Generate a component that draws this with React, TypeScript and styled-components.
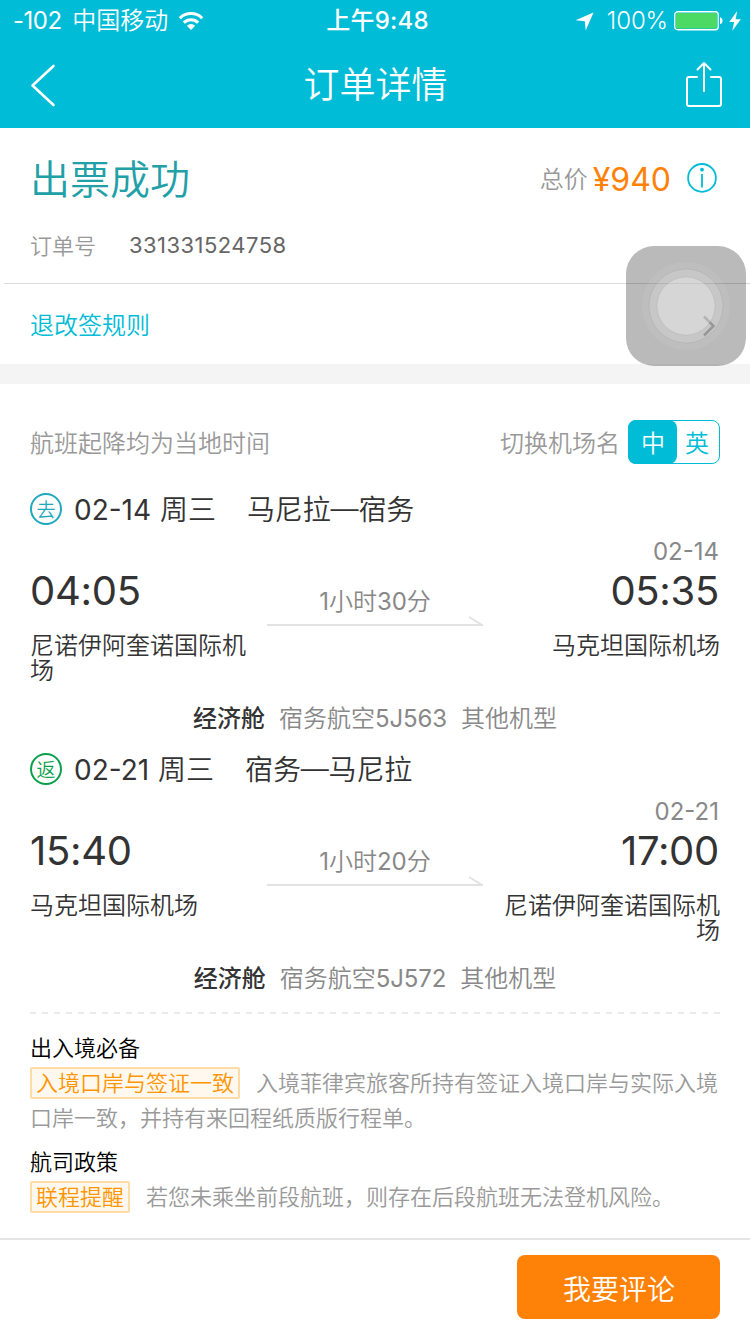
import React from "react";
import styled, { createGlobalStyle } from "styled-components";

const CYAN = "#00bcd7";
const ORANGE = "#ff8208";

const GlobalStyle = createGlobalStyle`
  *, *::before, *::after { box-sizing: border-box; }
  body {
    margin: 0;
    background: #fff;
    font-family: Inter, "Noto Sans CJK SC", sans-serif;
    font-weight: 350;
    -webkit-font-smoothing: antialiased;
  }
`;

const Screen = styled.div`
  position: relative;
  width: 750px;
  height: 1334px;
  display: flex;
  flex-direction: column;
  background: #fff;
  overflow: hidden;
  white-space: nowrap;
`;

const Digits = styled.span<{ $tracking?: number }>`
  font-weight: 400;
  letter-spacing: ${(p) => p.$tracking ?? 0}px;
`;

const Header = styled.header`
  height: 128px;
  flex: none;
  background: ${CYAN};
  color: #fff;
`;

const StatusBar = styled.div`
  height: 40px;
  padding: 1px 9px 0 13px;
  display: grid;
  grid-template-columns: 1fr auto 1fr;
  align-items: center;
  font-size: 24px;
  line-height: 40px;
`;

const StatusGroup = styled.div<{ $end?: boolean }>`
  display: flex;
  align-items: center;
  justify-content: ${(p) => (p.$end ? "flex-end" : "flex-start")};
  svg { flex: none; }
`;

const Carrier = styled.span`
  width: 165px;
  word-spacing: 4px;
`;

const Clock = styled.span`
  padding-left: 1px;
  font-weight: 500;
  letter-spacing: 0.2px;
`;

const Percent = styled.span`
  margin: 0 6px 0 13px;
  letter-spacing: -0.1px;
`;

const NavBar = styled.div`
  height: 88px;
  padding: 0 28px 0 30px;
  display: flex;
  align-items: center;
  justify-content: space-between;
`;

const Title = styled.h1`
  margin: 2px 0 0 9px;
  font-size: 36px;
  font-weight: 350;
  line-height: 50px;
`;

const Summary = styled.section`
  height: 155px;
  flex: none;
  padding: 20px 33px 0 30px;
`;

const SummaryRow = styled.div`
  height: 60px;
  display: flex;
  align-items: center;
  justify-content: space-between;
`;

const Status = styled.div`
  padding-top: 4px;
  font-size: 40px;
  line-height: 60px;
  color: #21a0a8;
`;

const Price = styled.div`
  display: flex;
  align-items: center;
  svg { margin-left: 16px; }
`;

const PriceLabel = styled.span`
  padding-bottom: 1px;
  font-size: 24px;
  color: #999;
`;

const Amount = styled.span`
  margin-left: 5px;
  padding-top: 3px;
  font-size: 32px;
  font-weight: 400;
  line-height: 40px;
  color: ${ORANGE};
`;

const OrderRow = styled.div`
  margin-top: 16px;
  height: 40px;
  display: flex;
  align-items: center;
  font-size: 22px;
  color: #999;
`;

const OrderNumber = styled.span`
  margin-left: 33px;
  padding-top: 1px;
  font-weight: 400;
  letter-spacing: 0.45px;
  color: #666;
`;

const RulesRow = styled.div`
  height: 81px;
  flex: none;
  margin-left: 4px;
  padding: 0 34px 2px 26px;
  display: flex;
  align-items: center;
  justify-content: space-between;
  border-top: 1px solid #dcdcdc;
  font-size: 24px;
  color: ${CYAN};
  svg { margin-top: 5px; }
`;

const Divider = styled.div`
  height: 20px;
  flex: none;
  background: #f4f4f4;
`;

const Flights = styled.section`
  padding: 36px 30px 0;
`;

const SwitchRow = styled.div`
  height: 44px;
  margin-bottom: 16px;
  display: flex;
  align-items: center;
  font-size: 24px;
  line-height: 42px;
  color: #999;
`;

const SwitchNotice = styled.span`
  padding-top: 3px;
`;

const SwitchLabel = styled.span`
  margin: 0 8px 0 auto;
  padding-top: 3px;
`;

const Toggle = styled.div`
  width: 92px;
  height: 44px;
  display: flex;
  border: 1px solid ${CYAN};
  border-radius: 8px;
`;

const ToggleOption = styled.div<{ $active?: boolean }>`
  width: ${(p) => (p.$active ? 49 : 43)}px;
  height: 44px;
  margin: -1px ${(p) => (p.$active ? 0 : -1)}px 0 ${(p) => (p.$active ? -1 : 0)}px;
  padding: 3px ${(p) => (p.$active ? 0 : 3)}px 0 ${(p) => (p.$active ? 1 : 0)}px;
  display: flex;
  align-items: center;
  justify-content: center;
  border-radius: 8px;
  background: ${(p) => (p.$active ? CYAN : "transparent")};
  color: ${(p) => (p.$active ? "#fff" : CYAN)};
`;

const LegBlock = styled.article`
  height: 260px;
  color: #333;
`;

const LegTitle = styled.div`
  height: 58px;
  display: flex;
  align-items: center;
  font-size: 28px;
  line-height: 56px;
`;

const DirectionBadge = styled.span<{ $color: string }>`
  width: 32px;
  height: 32px;
  margin-right: 12px;
  padding-top: 4px;
  display: flex;
  align-items: center;
  justify-content: center;
  border: 2px solid ${(p) => p.$color};
  border-radius: 50%;
  font-size: 19px;
  line-height: 28px;
  color: ${(p) => p.$color};
`;

const LegDate = styled.span`
  padding-top: 2px;
  word-spacing: 1px;
`;

const Route = styled.span`
  margin-left: 31px;
  padding-top: 2px;
  letter-spacing: -0.15px;
`;

const RouteDash = styled.span`
  font-family: "Liberation Sans", sans-serif;
  line-height: 1;
  vertical-align: 3px;
`;

const LegBody = styled.div`
  height: 164px;
  display: grid;
  grid-template-columns: 237px 216px 1fr;
`;

const Stop = styled.div<{ $end?: boolean }>`
  display: flex;
  flex-direction: column;
  text-align: ${(p) => (p.$end ? "right" : "left")};
  align-items: ${(p) => (p.$end ? "flex-end" : "flex-start")};
`;

const StopDate = styled.div`
  height: 28px;
  padding-right: 1px;
  line-height: 27px;
  font-size: 24px;
  font-weight: 400;
  color: #888;
`;

const StopTime = styled.div`
  height: 50px;
  padding-right: 1px;
  line-height: 50px;
  font-size: 40px;
  font-weight: 400;
  letter-spacing: -0.3px;
`;

const Airport = styled.div`
  width: 218px;
  margin-top: 17px;
  font-size: 24px;
  line-height: 25px;
  white-space: normal;
`;

const Duration = styled.div`
  padding-top: 50px;
  display: flex;
  flex-direction: column;
  align-items: center;
  font-size: 24px;
  line-height: 28px;
  color: #888;
  svg {
    flex: none;
    margin-top: -1px;
  }
`;

const Cabin = styled.div`
  height: 30px;
  margin-top: -1px;
  display: flex;
  align-items: center;
  justify-content: center;
  gap: 14px;
  font-size: 24px;
  color: #888;
`;

const CabinClass = styled.strong`
  font-weight: 500;
  color: #333;
`;

const DashedLine = styled.div`
  height: 2px;
  margin: 12px 30px 0;
  flex: none;
  background: repeating-linear-gradient(to right, #ebebeb 0 6px, transparent 6px 12px);
`;

const Notes = styled.section`
  padding: 16px 30px 0;
  flex: 1;
  font-size: 22px;
`;

const NoteHeading = styled.h2`
  margin: 0;
  height: 36px;
  font-size: 22px;
  font-weight: 350;
  line-height: 36px;
  color: #000;
`;

const NoteText = styled.p`
  margin: 0 0 8px;
  line-height: 35px;
  color: #999;
  white-space: normal;
`;

const Tag = styled.span`
  display: inline-block;
  height: 32px;
  margin-right: 16px;
  padding: 0 4px;
  border: 2px solid #ffdba6;
  border-radius: 2px;
  background: #fff8ef;
  line-height: 28px;
  color: #ff9500;
`;

const BottomBar = styled.footer`
  height: 96px;
  flex: none;
  padding: 15px 30px 0;
  display: flex;
  justify-content: flex-end;
  border-top: 2px solid #e5e5e5;
`;

const ReviewButton = styled.button`
  width: 203px;
  height: 64px;
  padding: 1px 0 0 1px;
  border: 0;
  border-radius: 8px;
  background: ${ORANGE};
  color: #fff;
  font: inherit;
  font-size: 28px;
`;

const AssistiveTouch = styled.div`
  position: absolute;
  left: 626px;
  top: 246px;
  width: 120px;
  height: 120px;
  border-radius: 28px;
  background: rgba(0, 0, 0, 0.27);
`;

const WifiIcon = () => (
  <svg width="26" height="20" viewBox="0 0 26 20" fill="none" stroke="#fff" strokeWidth="3">
    <path d="M1.8 7.2a15.8 15.8 0 0 1 22.4 0" />
    <path d="M5.8 11.6a10.3 10.3 0 0 1 14.4 0" />
    <path d="M13 19l-4.2-4.2a6 6 0 0 1 8.4 0z" fill="#fff" stroke="none" />
  </svg>
);

const LocationIcon = () => (
  <svg width="19" height="19" viewBox="0 0 19 19" fill="#fff">
    <path d="M18.5 .5 10.7 18.5 9.8 9.2 .5 8.3z" />
  </svg>
);

const BatteryIcon = () => (
  <svg width="55" height="20" viewBox="0 0 55 20">
    <rect x=".75" y=".75" width="43.5" height="18" rx="3" fill="none" stroke="#fff" strokeWidth="1.3" />
    <rect x="2" y="2" width="41" height="15.5" rx="1.6" fill="#4cd964" />
    <path d="M46 6.3c3.4.8 3.4 6.2 0 7z" fill="#fff" />
  </svg>
);

const BoltIcon = () => (
  <svg width="12" height="20" viewBox="0 0 12 20" fill="#fff">
    <path d="M8.2 0 .2 11h5L3.2 20 11.8 8.3H6.6z" />
  </svg>
);

const BackIcon = () => (
  <svg width="26" height="46" viewBox="0 -4 26 46" fill="none" stroke="#fff" strokeWidth="2.6" strokeLinecap="round" strokeLinejoin="round">
    <path d="M23.5 1 2.5 20.5l21 19.5" />
  </svg>
);

const ShareIcon = () => (
  <svg width="36" height="46" viewBox="0 0 36 46" fill="none" stroke="#fff" strokeWidth="2" strokeLinecap="round" strokeLinejoin="round">
    <path d="M11 16H3a2 2 0 0 0-2 2v25a2 2 0 0 0 2 2h30a2 2 0 0 0 2-2V18a2 2 0 0 0-2-2h-8" />
    <path d="M18 30V2M11.5 8.5 18 2l6.5 6.5" />
  </svg>
);

const InfoIcon = () => (
  <svg width="30" height="30" viewBox="0 0 30 30" fill="none" stroke={CYAN} strokeWidth="1.8">
    <circle cx="15" cy="14.9" r="13.9" />
    <path d="M15 11V24.5" />
    <circle cx="15" cy="6.7" r="1.9" fill={CYAN} stroke="none" />
  </svg>
);

const ChevronIcon = () => (
  <svg width="14" height="22" viewBox="0 0 14 22" fill="none" stroke="#adadad" strokeWidth="2.6">
    <path d="M2 1.5 11.5 11 2 20.5" />
  </svg>
);

const ArrowLine = () => (
  <svg width="216" height="11" viewBox="0 0 216 11" fill="none" stroke="#e2e2e2" strokeWidth="2">
    <path d="M0 10h215L202 2" />
  </svg>
);

const TouchRings = () => (
  <svg width="120" height="120" viewBox="0 0 120 120" fill="#fff">
    <circle cx="60" cy="60" r="44" fillOpacity=".07" />
    <circle cx="60" cy="60" r="37" fillOpacity=".15" />
    <circle cx="60" cy="60" r="29" fillOpacity=".27" />
    <g fill="none" stroke="#000" strokeOpacity=".06">
      <circle cx="60" cy="60" r="37" />
      <circle cx="60" cy="60" r="29" />
    </g>
  </svg>
);

interface Leg {
  badge: string;
  color: string;
  date: string;
  weekday: string;
  from: string;
  to: string;
  departTime: string;
  departAirport: string;
  minutes: string;
  arriveDate: string;
  arriveTime: string;
  arriveAirport: string;
  flightNo: string;
}

const legs: Leg[] = [
  {
    badge: "去",
    color: "#1fa9bd",
    date: "02-14",
    weekday: "周三",
    from: "马尼拉",
    to: "宿务",
    departTime: "04:05",
    departAirport: "尼诺伊阿奎诺国际机场",
    minutes: "30",
    arriveDate: "02-14",
    arriveTime: "05:35",
    arriveAirport: "马克坦国际机场",
    flightNo: "5J563",
  },
  {
    badge: "返",
    color: "#0a9f4b",
    date: "02-21",
    weekday: "周三",
    from: "宿务",
    to: "马尼拉",
    departTime: "15:40",
    departAirport: "马克坦国际机场",
    minutes: "20",
    arriveDate: "02-21",
    arriveTime: "17:00",
    arriveAirport: "尼诺伊阿奎诺国际机场",
    flightNo: "5J572",
  },
];

const notes = [
  {
    heading: "出入境必备",
    tag: "入境口岸与签证一致",
    text: "入境菲律宾旅客所持有签证入境口岸与实际入境口岸一致，并持有来回程纸质版行程单。",
  },
  {
    heading: "航司政策",
    tag: "联程提醒",
    text: "若您未乘坐前段航班，则存在后段航班无法登机风险。",
  },
];

const FlightLeg = ({ leg }: { leg: Leg }) => (
  <LegBlock>
    <LegTitle>
      <DirectionBadge $color={leg.color}>{leg.badge}</DirectionBadge>
      <LegDate>
        <Digits>{leg.date}</Digits> {leg.weekday}
      </LegDate>
      <Route>
        {leg.from}
        <RouteDash>—</RouteDash>
        {leg.to}
      </Route>
    </LegTitle>
    <LegBody>
      <Stop>
        <StopDate />
        <StopTime>{leg.departTime}</StopTime>
        <Airport>{leg.departAirport}</Airport>
      </Stop>
      <Duration>
        <span>
          <Digits>1</Digits>小时<Digits>{leg.minutes}</Digits>分
        </span>
        <ArrowLine />
      </Duration>
      <Stop $end>
        <StopDate>{leg.arriveDate}</StopDate>
        <StopTime>{leg.arriveTime}</StopTime>
        <Airport>{leg.arriveAirport}</Airport>
      </Stop>
    </LegBody>
    <Cabin>
      <CabinClass>经济舱</CabinClass>
      <span>
        宿务航空<Digits $tracking={-0.1}>{leg.flightNo}</Digits>
      </span>
      <span>其他机型</span>
    </Cabin>
  </LegBlock>
);

export default function App() {
  return (
    <Screen lang="zh-CN">
      <GlobalStyle />
      <Header>
        <StatusBar>
          <StatusGroup>
            <Carrier>
              <Digits $tracking={-0.5}>-102</Digits> 中国移动
            </Carrier>
            <WifiIcon />
          </StatusGroup>
          <Clock>上午9:48</Clock>
          <StatusGroup $end>
            <LocationIcon />
            <Percent>100%</Percent>
            <BatteryIcon />
            <BoltIcon />
          </StatusGroup>
        </StatusBar>
        <NavBar>
          <BackIcon />
          <Title>订单详情</Title>
          <ShareIcon />
        </NavBar>
      </Header>
      <Summary>
        <SummaryRow>
          <Status>出票成功</Status>
          <Price>
            <PriceLabel>总价</PriceLabel>
            <Amount>¥940</Amount>
            <InfoIcon />
          </Price>
        </SummaryRow>
        <OrderRow>
          订单号<OrderNumber>331331524758</OrderNumber>
        </OrderRow>
      </Summary>
      <RulesRow>
        退改签规则
        <ChevronIcon />
      </RulesRow>
      <Divider />
      <Flights>
        <SwitchRow>
          <SwitchNotice>航班起降均为当地时间</SwitchNotice>
          <SwitchLabel>切换机场名</SwitchLabel>
          <Toggle>
            <ToggleOption $active>中</ToggleOption>
            <ToggleOption>英</ToggleOption>
          </Toggle>
        </SwitchRow>
        {legs.map((leg) => (
          <FlightLeg key={leg.badge} leg={leg} />
        ))}
      </Flights>
      <DashedLine />
      <Notes>
        {notes.map((note) => (
          <div key={note.heading}>
            <NoteHeading>{note.heading}</NoteHeading>
            <NoteText>
              <Tag>{note.tag}</Tag>
              {note.text}
            </NoteText>
          </div>
        ))}
      </Notes>
      <BottomBar>
        <ReviewButton>我要评论</ReviewButton>
      </BottomBar>
      <AssistiveTouch>
        <TouchRings />
      </AssistiveTouch>
    </Screen>
  );
}
